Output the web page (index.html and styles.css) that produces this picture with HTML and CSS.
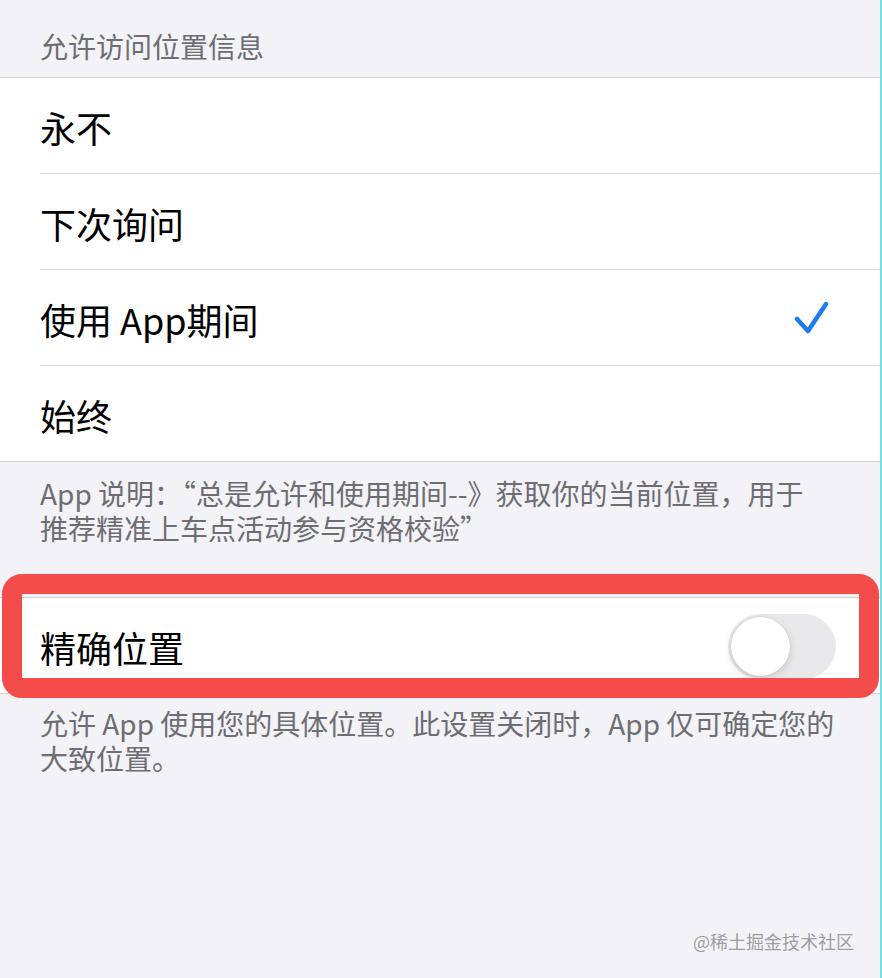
FILE: index.html
```html
<!DOCTYPE html>
<html lang="zh-CN">
<head>
    <meta charset="UTF-8">
    <meta name="viewport" content="width=device-width, initial-scale=1.0">
    <title>位置</title>
    <link rel="stylesheet" href="styles.css">
</head>
<body>
    <div class="screen">
        <div class="section-header">允许访问位置信息</div>

        <div class="group">
            <div class="row"><div class="row-inner"><span class="row-label">永不</span></div></div>
            <div class="row"><div class="row-inner"><span class="row-label">下次询问</span></div></div>
            <div class="row">
                <div class="row-inner">
                    <span class="row-label">使用 App期间</span>
                    <svg class="check" width="36" height="36" viewBox="0 0 36 36">
                        <polyline points="3,19 14,31 32,4" fill="none" stroke="#1c7cee" stroke-width="4.5" stroke-linecap="round" stroke-linejoin="round"/>
                    </svg>
                </div>
            </div>
            <div class="row"><div class="row-inner"><span class="row-label">始终</span></div></div>
        </div>

        <p class="section-footer footer-desc">App 说明：“总是允许和使用期间--》获取你的当前位置，用于推荐精准上车点活动参与资格校验”</p>

        <div class="group group-precise">
            <div class="row">
                <div class="row-inner">
                    <span class="row-label">精确位置</span>
                    <span class="switch"><span class="switch-knob"></span></span>
                </div>
            </div>
            <div class="highlight"></div>
        </div>

        <p class="section-footer footer-precise">允许 App 使用您的具体位置。此设置关闭时，App 仅可确定您的大致位置。</p>

        <div class="watermark">@稀土掘金技术社区</div>
    </div>
</body>
</html>
```

FILE: styles.css
```css
* {
    margin: 0;
    padding: 0;
    box-sizing: border-box;
}

body {
    font-family: "Noto Sans CJK SC", "Noto Sans", sans-serif;
    background-color: #f2f2f7;
}

.screen {
    position: relative;
    width: 882px;
    min-height: 978px;
    border-right: 2px solid #6fe2e4;
    background-color: #f2f2f7;
}

.section-header {
    padding: 28px 40px 13px;
    font-size: 28px;
    line-height: 36px;
    color: #6d6d72;
}

.group {
    position: relative;
    background: white;
    border-top: 1px solid #d1d1d6;
    border-bottom: 1px solid #d1d1d6;
}

.row {
    padding-left: 40px;
}

.row-inner {
    height: 96px;
    display: flex;
    align-items: center;
    justify-content: space-between;
    padding-right: 50px;
    border-bottom: 1px solid #dcdce0;
}

.row:last-child .row-inner,
.group-precise .row-inner {
    height: 95px;
    border-bottom: none;
}

.row-label {
    font-size: 36px;
    line-height: 40px;
    color: #000;
    padding-top: 3px;
}

.check {
    display: block;
}

.section-footer {
    padding: 14px 42px 51px 40px;
    font-size: 28px;
    line-height: 35px;
    color: #6d6d72;
}

.footer-desc {
    padding-right: 56px;
}

.footer-precise {
    padding-top: 12px;
}

/* 开关（关闭状态） */
.switch {
    position: relative;
    display: block;
    width: 108px;
    height: 65px;
    border-radius: 33px;
    background-color: #e9e9eb;
    margin-right: -6px;
    margin-top: 2px;
}

.switch-knob {
    position: absolute;
    top: 3px;
    left: 3px;
    width: 59px;
    height: 59px;
    border-radius: 50%;
    background: white;
    box-shadow: 0 3px 8px rgba(0, 0, 0, 0.15), 0 0 1px rgba(0, 0, 0, 0.2);
}

/* 红色标注框 */
.highlight {
    position: absolute;
    top: -24px;
    left: 2px;
    right: 1px;
    bottom: -5px;
    border: 20px solid #f44b4b;
    border-radius: 20px;
}

.watermark {
    position: absolute;
    right: 26px;
    bottom: 26px;
    font-size: 18px;
    line-height: 22px;
    color: #9c9ca1;
    text-shadow: 0 0 2px rgba(255, 255, 255, 0.8);
}
```
